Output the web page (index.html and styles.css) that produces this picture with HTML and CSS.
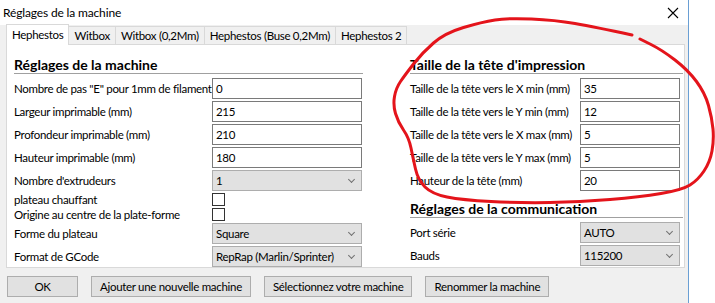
FILE: index.html
```html
<!DOCTYPE html>
<html lang="fr">
<head>
  <meta charset="UTF-8" />
  <title>Réglages de la machine</title>
  <link rel="stylesheet" href="styles.css">
</head>
<body>

  <div class="window">
    <div class="titlebar">
      <span class="title">Réglages de la machine</span>
      <svg class="close" width="12" height="12" viewBox="0 0 12 12">
        <path d="M1 1 L11 11 M11 1 L1 11" stroke="#000" stroke-width="1.1" fill="none"/>
      </svg>
    </div>

    <div class="main">
      <div class="tabs">
        <div class="tab active">Hephestos</div>
        <div class="tab">Witbox</div>
        <div class="tab">Witbox (0,2Mm)</div>
        <div class="tab">Hephestos (Buse 0,2Mm)</div>
        <div class="tab">Hephestos 2</div>
      </div>

      <div class="panel">
        <div class="col col-left">
          <div class="section-title">Réglages de la machine</div>
          <div class="row"><span>Nombre de pas "E" pour 1mm de filament</span><div class="field">0</div></div>
          <div class="row"><span>Largeur imprimable (mm)</span><div class="field">215</div></div>
          <div class="row"><span>Profondeur imprimable (mm)</span><div class="field">210</div></div>
          <div class="row"><span>Hauteur imprimable (mm)</span><div class="field">180</div></div>
          <div class="row"><span>Nombre d'extrudeurs</span><div class="select">1<i class="chev"></i></div></div>
          <div class="row row-check"><span>plateau chauffant</span><div class="check"></div></div>
          <div class="row row-check"><span>Origine au centre de la plate-forme</span><div class="check"></div></div>
          <div class="row"><span>Forme du plateau</span><div class="select">Square<i class="chev"></i></div></div>
          <div class="row"><span>Format de GCode</span><div class="select">RepRap (Marlin/Sprinter)<i class="chev"></i></div></div>
        </div>

        <div class="col col-right">
          <div class="section-title">Taille de la tête d'impression</div>
          <div class="row"><span>Taille de la tête vers le X min (mm)</span><div class="field">35</div></div>
          <div class="row"><span>Taille de la tête vers le Y min (mm)</span><div class="field">12</div></div>
          <div class="row"><span>Taille de la tête vers le X max (mm)</span><div class="field">5</div></div>
          <div class="row"><span>Taille de la tête vers le Y max (mm)</span><div class="field">5</div></div>
          <div class="row"><span>Hauteur de la tête (mm)</span><div class="field">20</div></div>

          <div class="section-title second">Réglages de la communication</div>
          <div class="row"><span>Port série</span><div class="select">AUTO<i class="chev"></i></div></div>
          <div class="row"><span>Bauds</span><div class="select">115200<i class="chev"></i></div></div>
        </div>
      </div>

      <div class="buttons">
        <button class="btn btn-ok">OK</button>
        <button class="btn">Ajouter une nouvelle machine</button>
        <button class="btn">Sélectionnez votre machine</button>
        <button class="btn">Renommer la machine</button>
      </div>
    </div>
  </div>

  <!-- hand-drawn circle around the print head settings -->
  <svg class="scribble" width="715" height="303" viewBox="0 0 715 303">
    <path d="M640,39 L651,44.5 Q662,50 675,60 Q688,70 696.5,81.5 Q705,93 708.5,105.5 Q712,118 713,129 Q714,140 712,151 Q710,162 704,171 Q698,180 690,185 Q682,190 661,193.5 Q640,197 610,199.5 Q580,202 550,202.5 Q520,203 491,201.5 Q462,200 447,197 Q432,194 425,187 Q418,180 415.5,169 Q413,158 411,148 Q409,138 403.5,130 Q398,122 395.5,113.5 Q393,105 394.5,96.5 Q396,88 400.5,81.5 Q405,75 413.5,64 Q422,53 433.5,43 Q445,33 463.5,27.5 Q482,22 495,20 Q508,18 531.5,19 Q555,20 575,23.5 Q595,27 632,35"
          fill="none" stroke="#e4141b" stroke-width="3" stroke-linecap="round" stroke-linejoin="round"/>
  </svg>

</body>
</html>
```

FILE: styles.css
```css
body {
  margin: 0;
  width: 715px;
  height: 303px;
  overflow: hidden;
  position: relative;
  background: #fff;
  font-family: Lato, "Noto Sans", sans-serif;
  font-size: 11.5px;
  letter-spacing: -0.3px;
  color: #000;
}
.window {
  width: 688px;
  height: 303px;
  border-right: 1px solid #6a9fd4;
}
.titlebar {
  height: 25px;
  display: flex;
  align-items: center;
  justify-content: space-between;
  padding-left: 3px;
  font-size: 12px;
  letter-spacing: -0.15px;
}
.close {
  margin-right: 9px;
}
.main {
  background: #f0f0f0;
  height: 278px;
  padding: 0 3px 0 6px;
}
.tabs {
  display: flex;
  align-items: flex-end;
  height: 19px;
}
.tab {
  height: 17px;
  line-height: 18px;
  padding: 0 5px;
  border: 1px solid #d9d9d9;
  border-bottom: none;
  margin-left: -1px;
  background: #f0f0f0;
  white-space: nowrap;
}
.tab.active {
  height: 20px;
  line-height: 19px;
  padding: 0 5px;
  margin-left: 0;
  margin-bottom: -1px;
  background: #fff;
  position: relative;
  z-index: 1;
}
.panel {
  background: #fff;
  border: 1px solid #d9d9d9;
  height: 222px;
  display: flex;
}
.col {
  padding-top: 12px;
}
.col-left {
  width: 349px;
  margin-left: 7px;
}
.col-right {
  width: 273px;
  margin-left: 47px;
}
.section-title {
  font-weight: bold;
  font-size: 14px;
  letter-spacing: 0;
  line-height: 16px;
  border-bottom: 1px solid #a0a0a0;
  margin-bottom: 4px;
}
.section-title.second {
  margin-top: 10px;
}
.row {
  display: grid;
  grid-template-columns: 198px 150px;
  align-items: center;
  height: 21px;
  margin-bottom: 2px;
  white-space: nowrap;
}
.col-right .row {
  grid-template-columns: 170px 100px;
}
.row-check {
  height: 13px;
}
.field, .select {
  box-sizing: border-box;
  height: 21px;
  line-height: 19px;
  padding-left: 3px;
}
.field {
  border: 1px solid #7a7a7a;
  background: #fff;
}
.select {
  border: 1px solid #adadad;
  background: #e1e1e1;
  position: relative;
}
.chev {
  position: absolute;
  right: 7px;
  top: 6px;
  width: 4px;
  height: 4px;
  border-right: 1px solid #707070;
  border-bottom: 1px solid #707070;
  transform: rotate(45deg);
}
.check {
  width: 13px;
  height: 13px;
  box-sizing: border-box;
  border: 1px solid #333;
  background: #fff;
}
.buttons {
  display: flex;
  gap: 13px;
  padding: 8px 0 0 1px;
}
.btn {
  height: 21px;
  padding: 0 8px;
  border: 1px solid #adadad;
  background: #e1e1e1;
  font-family: inherit;
  font-size: 11.5px;
  letter-spacing: -0.3px;
  color: #000;
}
.btn-ok {
  width: 71px;
}
.scribble {
  position: absolute;
  top: 0;
  left: 0;
  pointer-events: none;
}
```
